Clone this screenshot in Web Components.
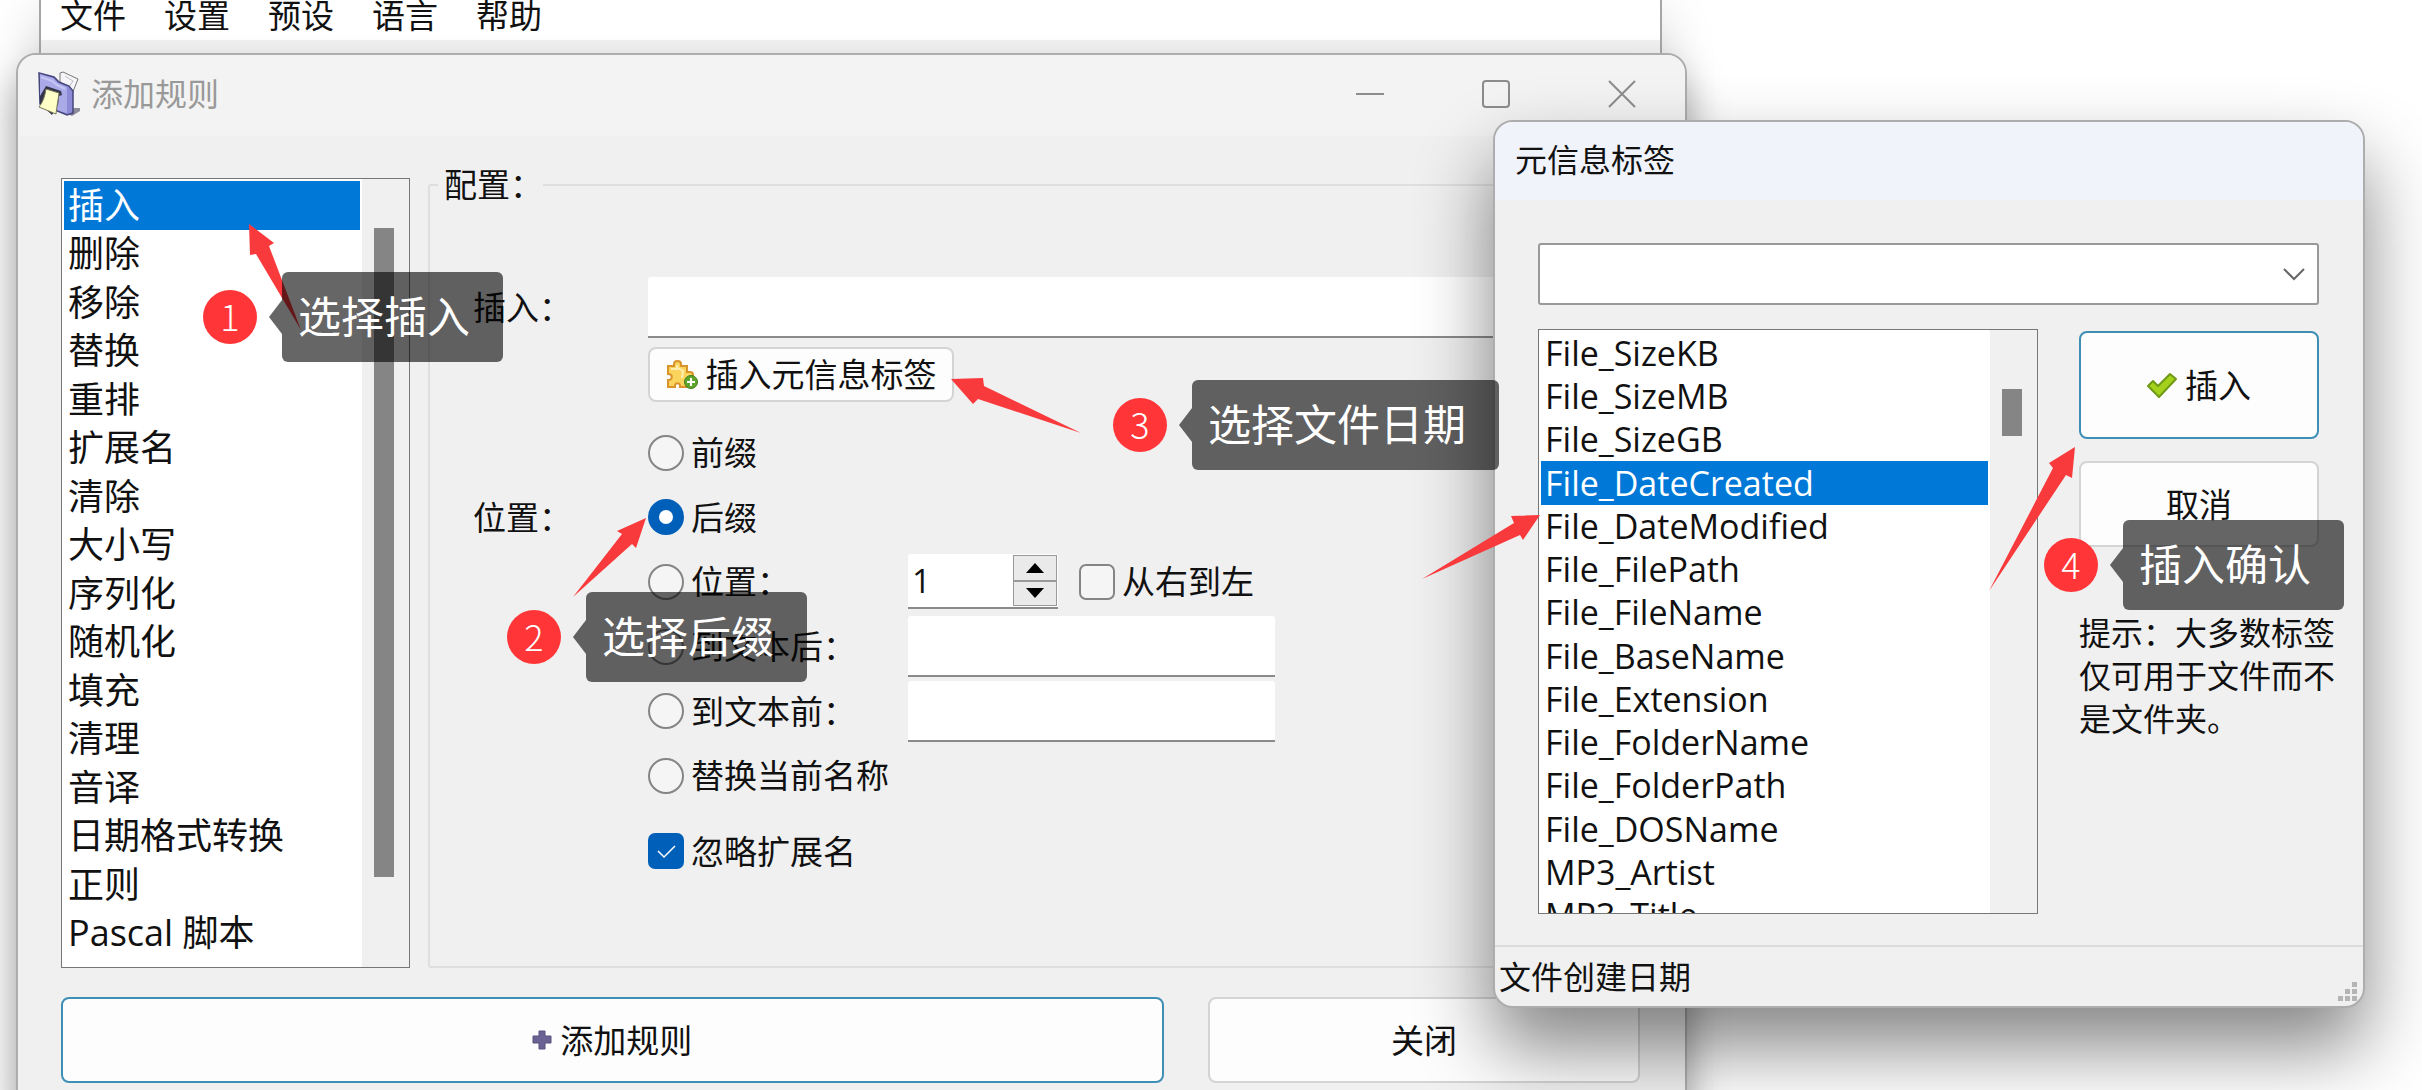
<!DOCTYPE html>
<html lang="zh-CN">
<head>
<meta charset="utf-8">
<title>添加规则</title>
<style>
  html, body {
    height: 100%;
  }

  body {
    margin: 0;
    overflow: hidden;
    background: #fff;
    color: #111;
    font: 33px/43px "Open Sans", "Noto Sans CJK SC", sans-serif;
  }
</style>
</head>
<body>
<desk-top></desk-top>

<script>
const define = (name, html, setup) => {
  const template = document.createElement('template')
  template.innerHTML = html

  customElements.define(name, class extends HTMLElement {
    constructor() {
      super()
      this.attachShadow({ mode: 'open' }).appendChild(template.content.cloneNode(true))
    }

    connectedCallback() {
      if (setup) setup(this, this.shadowRoot)
    }
  })
}

// window frame: title bar and body
define('desk-window', `
  <style>
    :host {
      display: block;
      box-sizing: border-box;
      border: 2px solid #adadad;
      border-radius: 20px;
      background: #f0f0f0;
      overflow: hidden;
    }
    header {
      display: flex;
      align-items: center;
      box-sizing: border-box;
      height: var(--title-height, 81px);
      padding: 0 48px 4px 20px;
      background: var(--title-bg, #f3f3f3);
      color: var(--title-color, #111);
      font-size: 32px;
    }
    h1 {
      flex: 1;
      margin: 0;
      font: inherit;
    }
  </style>
  <header><slot name="icon"></slot><h1></h1><slot name="controls"></slot></header>
  <slot></slot>
`, (el, root) => {
  root.querySelector('h1').textContent = el.getAttribute('heading')
})

define('window-controls', `
  <style>
    :host { display: flex; gap: 96px; }
    button { width: 30px; height: 30px; padding: 0; border: 0; background: none; }
    svg { display: block; fill: none; stroke: #8c8c8c; stroke-width: 2; }
  </style>
  <button aria-label="最小化"><svg width="30" height="30"><path d="M1 15H29"/></svg></button>
  <button aria-label="最大化"><svg width="30" height="30"><rect x="2" y="2" width="26" height="26" rx="3"/></svg></button>
  <button aria-label="关闭"><svg width="30" height="30"><path d="M2 2L28 28M28 2L2 28"/></svg></button>
`)

define('app-icon', `
  <style>
    :host { display: block; width: 44px; height: 46px; margin-right: 9px; }
  </style>
  <svg width="44" height="46" viewBox="0 0 44 46">
    <path d="M33 37L42 37L42 40L34 45L30 43Z" fill="#8a8a98"/>
    <path d="M22 2L25 1L40 8L34 23L22 12Z" fill="#f6f6fa" stroke="#777" stroke-width="1"/>
    <path d="M27 5L35 10L31 16" fill="none" stroke="#bbb"/>
    <path d="M1 2L16 6L21 11L31 15L35 20L35 42L29 44L2 33Z" fill="#8c8cd6" stroke="#45457c" stroke-width="1.5"/>
    <path d="M2 3L15 7L20 12L29 16L29 42L22 40L2 30Z" fill="#aaaae8"/>
    <path d="M3 6L14 10L19 14L27 18" fill="none" stroke="#c5c5f5" stroke-width="2"/>
    <path d="M8 15L23 20L24 24L21 25L20 34L14 44L2 33L2 25Z" fill="#34344a"/>
    <path d="M8 18L21 22C20 30 19 34 18 43L1 36C5 31 7 25 8 18Z" fill="#ffffc8" stroke="#77775c" stroke-width="1"/>
  </svg>
`)

define('push-button', `
  <style>
    :host { display: block; }
    button {
      display: flex;
      align-items: center;
      justify-content: center;
      gap: 8px;
      box-sizing: border-box;
      width: 100%;
      height: 100%;
      padding: 0;
      border: 2px solid #d4d4d4;
      border-radius: 8px;
      background: #fdfdfd;
      color: inherit;
      font: inherit;
      white-space: nowrap;
    }
    :host([primary]) button { border-color: #3f8fb5; }
    ::slotted(svg) { flex: none; }
  </style>
  <button><slot name="icon"></slot><span><slot></slot></span></button>
`)

define('list-box', `
  <style>
    :host {
      display: grid;
      grid-template-columns: minmax(0, 1fr) 47px;
      box-sizing: border-box;
      border: 1px solid #777;
      background: #fff;
      overflow: hidden;
      font-size: 34px;
    }
    ul {
      margin: 0;
      padding: 2px;
      list-style: none;
      overflow: hidden;
    }
    li {
      padding-left: 4px;
      line-height: 43px;
      white-space: nowrap;
    }
    li:nth-child(4n) { line-height: 44px; }
    :host([large]) { font-size: 36px; }
    :host([large]) li { line-height: 48px; }
    :host([large]) li:nth-child(odd) { line-height: 49px; }
    li[aria-selected=true] { background: #0078d7; color: #fff; }
    .track {
      padding: var(--thumb-top) 0 0 12px;
      background: #f0f0f0;
    }
    .thumb {
      width: 20px;
      height: var(--thumb-height);
      background: #858585;
    }
  </style>
  <ul role="listbox"></ul>
  <div class="track"><div class="thumb"></div></div>
`, (el, root) => {
  const ul = root.querySelector('ul')
  ul.setAttribute('aria-label', el.getAttribute('label'))
  el.getAttribute('items').split('|').forEach(text => {
    const li = document.createElement('li')
    li.setAttribute('role', 'option')
    li.setAttribute('aria-selected', text === el.getAttribute('selected'))
    li.textContent = text
    ul.appendChild(li)
  })
})

// radio or check box with its label
define('choice-field', `
  <style>
    :host { display: flex; align-items: center; }
    label { display: flex; align-items: center; gap: 7px; white-space: nowrap; }
    input {
      appearance: none;
      box-sizing: border-box;
      width: 36px;
      height: 36px;
      margin: 0;
      border: 2px solid #858585;
      background: #f5f5f5;
    }
    input[type=radio] { border-radius: 50%; }
    input[type=radio]:checked { border: 11px solid #005fb8; background: #fff; }
    input[type=checkbox] { border-radius: 7px; }
    .box { display: grid; }
    .box > * { grid-area: 1 / 1; }
    input[type=checkbox]:checked { border-color: #005fb8; background: #005fb8; }
    svg { display: none; fill: none; stroke: #fff; stroke-width: 1.5; pointer-events: none; }
    input[type=checkbox]:checked + svg { display: block; }
  </style>
  <label>
    <span class="box"><input><svg width="36" height="36"><path d="M10 18L16 24L27 13"/></svg></span>
    <span><slot></slot></span>
  </label>
`, (el, root) => {
  const input = root.querySelector('input')
  input.type = el.getAttribute('type')
  input.checked = el.hasAttribute('checked')
})

define('rule-config', `
  <style>
    :host { display: block; }
    fieldset {
      box-sizing: border-box;
      height: 100%;
      margin: 0;
      padding: 71px 0 0 43px;
      border: 2px solid #dfdfdf;
      border-radius: 3px;
    }
    legend { margin-left: -35px; padding: 0 0 0 6px; }
    .form {
      display: grid;
      grid-template-columns: 175px 260px 1fr;
      grid-template-rows: 61px 9px 55px 18px repeat(2, 65px 64px 65px) 25px 36px;
      align-items: center;
    }
    .text, .number {
      box-sizing: border-box;
      height: 61px;
      padding: 0 8px;
      border: 0;
      border-bottom: 2px solid #8a8a8a;
      background: #fff;
      color: inherit;
      font: inherit;
      border-radius: 3px 3px 0 0;
    }
    .wide { grid-area: 1 / 2 / 2 / 4; }
    .tag { grid-area: 3 / 2 / 4 / 4; justify-self: start; height: 55px; width: 306px; }
    .place { grid-area: 6 / 1; }
    .c1 { grid-area: 5 / 2; }
    .c2 { grid-area: 6 / 2; }
    .c3 { grid-area: 7 / 2; }
    .c4 { grid-area: 8 / 2; }
    .c5 { grid-area: 9 / 2; }
    .c6 { grid-area: 10 / 2 / 11 / 4; }
    .c7 { grid-area: 12 / 2 / 13 / 4; }
    .e3 { grid-area: 7 / 3; display: flex; align-items: center; gap: 21px; }
    .e4 { grid-area: 8 / 3; width: 367px; }
    .e5 { grid-area: 9 / 3; width: 367px; }
    .number { display: flex; width: 150px; height: 55px; padding: 0; }
    .number input {
      appearance: textfield;
      flex: 1;
      min-width: 0;
      padding: 0 4px;
      border: 0;
      background: none;
      color: inherit;
      font: inherit;
    }
    .number input::-webkit-inner-spin-button { appearance: none; }
    .spin { display: grid; grid-template-rows: 1fr 1fr; width: 44px; padding: 1px; }
    .spin button { display: grid; place-items: center; padding: 0; border: 1px solid #999; background: #eaeaea; }
  </style>
  <fieldset>
    <legend>配置：</legend>
    <div class="form">
      <label for="insert">插入：</label>
      <input class="text wide" id="insert">
      <push-button class="tag">
        <svg slot="icon" width="32" height="30" viewBox="0 0 32 30">
          <path d="M2 6H8V4C8 0 15 0 15 4V6H21V12H24C28 12 28 18 24 18H21V27H14C15 22 8 22 9 27H2V20C7 20 7 14 2 14Z" fill="#fbd45e" stroke="#d9932b" stroke-width="2"/>
          <path d="M5 9H11V5M12 8L17 11L16 18" stroke="#ffeeb0" stroke-width="2" fill="none"/>
          <circle cx="25" cy="22" r="6.5" fill="#5fa52c" stroke="#3f7d1c"/>
          <path d="M25 18V26M21 22H29" stroke="#fff" stroke-width="2"/>
        </svg>插入元信息标签</push-button>
      <span class="place">位置：</span>
      <choice-field class="c1" type="radio">前缀</choice-field>
      <choice-field class="c2" type="radio" checked>后缀</choice-field>
      <choice-field class="c3" type="radio">位置：</choice-field>
      <div class="e3">
        <div class="number">
          <input type="number" value="1" aria-label="位置">
          <div class="spin">
            <button aria-label="增加"><svg width="18" height="10"><path d="M0 10L9 0L18 10Z"/></svg></button>
            <button aria-label="减少"><svg width="18" height="10"><path d="M0 0L9 10L18 0Z"/></svg></button>
          </div>
        </div>
        <choice-field type="checkbox">从右到左</choice-field>
      </div>
      <choice-field class="c4" type="radio">到文本后：</choice-field>
      <input class="text e4" aria-label="到文本后">
      <choice-field class="c5" type="radio">到文本前：</choice-field>
      <input class="text e5" aria-label="到文本前">
      <choice-field class="c6" type="radio">替换当前名称</choice-field>
      <choice-field class="c7" type="checkbox" checked>忽略扩展名</choice-field>
    </div>
  </fieldset>
`)

define('rule-panel', `
  <style>
    :host { display: block; padding: 27px 45px 40px 43px; }
    .top { display: grid; grid-template-columns: 349px 1fr; gap: 18px; height: 805px; }
    list-box { margin-top: 15px; --thumb-top: 49px; --thumb-height: 649px; }
    .actions { display: grid; grid-template-columns: 51fr 20fr; gap: 44px; margin-top: 29px; }
    push-button { height: 86px; }
  </style>
  <div class="top">
    <list-box large label="规则" selected="插入"
      items="插入|删除|移除|替换|重排|扩展名|清除|大小写|序列化|随机化|填充|清理|音译|日期格式转换|正则|Pascal 脚本"></list-box>
    <rule-config></rule-config>
  </div>
  <div class="actions">
    <push-button primary>
      <svg slot="icon" width="20" height="20"><path d="M7 1H13V6H19V13H13V19H7V13H1V6H7Z" fill="#6b6294" stroke="#57507e"/></svg>添加规则</push-button>
    <push-button>关闭</push-button>
  </div>
`)

define('tag-panel', `
  <style>
    :host { display: block; }
    .body { padding: 43px 18px 31px 43px; }
    .combo { display: grid; align-items: center; margin-right: 26px; }
    .combo > * { grid-area: 1 / 1; }
    select {
      appearance: none;
      width: 100%;
      height: 62px;
      border: 2px solid #999;
      border-radius: 3px;
      background: #fff;
      font: inherit;
    }
    .combo svg { justify-self: end; margin-right: 14px; fill: none; stroke: #666; stroke-width: 2; pointer-events: none; }
    .cols { display: grid; grid-template-columns: 500px 1fr; gap: 41px; margin-top: 24px; height: 585px; }
    list-box { --thumb-top: 59px; --thumb-height: 47px; min-height: 0; }
    push-button { margin: 2px 26px 22px 0; height: 108px; }
    push-button + push-button { margin: 0 26px 64px 0; height: 86px; }
    p { margin: 0; font-size: 32px; }
    footer {
      display: flex;
      align-items: center;
      justify-content: space-between;
      height: 59px;
      padding: 0 6px 0 4px;
      border-top: 2px solid #dcdcdc;
      font-size: 32px;
    }
    footer svg { align-self: flex-end; margin-bottom: 4px; fill: #b4b4b4; }
  </style>
  <div class="body">
    <div class="combo">
      <select aria-label="筛选"><option></option></select>
      <svg width="22" height="14"><path d="M1 2L11 12L21 2"/></svg>
    </div>
    <div class="cols">
      <list-box label="标签" selected="File_DateCreated"
        items="File_SizeKB|File_SizeMB|File_SizeGB|File_DateCreated|File_DateModified|File_FilePath|File_FileName|File_BaseName|File_Extension|File_FolderName|File_FolderPath|File_DOSName|MP3_Artist|MP3_Title"></list-box>
      <div>
        <push-button primary>
          <svg slot="icon" width="30" height="26"><path d="M1 14L6 9L11 14L23 2L29 7L12 25Z" fill="#a4d21c" stroke="#6f9a17" stroke-width="2" stroke-linejoin="round"/></svg>插入</push-button>
        <push-button>取消</push-button>
        <p>提示：大多数标签仅可用于文件而不是文件夹。</p>
      </div>
    </div>
  </div>
  <footer>
    <span>文件创建日期</span>
    <svg width="20" height="20"><path d="M15 0h5v5h-5zM15 7h5v5h-5zM8 7h5v5h-5zM15 14h5v5h-5zM8 14h5v5h-5zM1 14h5v5h-5z"/></svg>
  </footer>
`)

define('main-menu', `
  <style>
    :host { display: block; box-sizing: border-box; border: solid #a5a5a5; border-width: 0 2px; background: #f0f0f0; }
    nav { display: flex; gap: 38px; height: 40px; padding-left: 19px; line-height: 32px; background: #fff; }
    a { color: inherit; text-decoration: none; }
  </style>
  <nav><a href="#">文件</a><a href="#">设置</a><a href="#">预设</a><a href="#">语言</a><a href="#">帮助</a></nav>
`)

// numbered red dot with a speech bubble on its right
define('step-callout', `
  <style>
    :host { display: flex; align-items: center; height: 90px; }
    .dot {
      width: 54px;
      height: 54px;
      margin-right: 12px;
      border-radius: 50%;
      background: #ff3538;
      color: #fff;
      font: 300 36px/50px "Noto Sans CJK SC", sans-serif;
      text-align: center;
    }
    svg { display: block; }
    .bubble {
      padding: 0 33px 0 16px;
      border-radius: 6px;
      background: rgba(0, 0, 0, .6);
      color: #fff;
      font-size: 43px;
      line-height: 90px;
      white-space: nowrap;
    }
  </style>
  <span class="dot"></span>
  <svg width="13" height="34"><path d="M13 0L0 17L13 34Z" fill="rgba(0,0,0,.6)"/></svg>
  <span class="bubble"><slot></slot></span>
`, (el, root) => {
  root.querySelector('.dot').textContent = el.getAttribute('step')
})

define('arrow-layer', `
  <style>
    :host { display: block; pointer-events: none; }
    svg { display: block; width: 100%; height: 100%; fill: #f93a3c; }
  </style>
  <svg>
    <path d="M249 224L274 243L269 246L301 330L256 254L250 255Z"/>
    <path d="M646 518L617 531L622 534L573 597L632 544L636 548Z"/>
    <path d="M951 379L983 378L984 386L1081 433L978 399L973 404Z"/>
    <path d="M1540 515L1511 516L1514 523L1422 579L1520 535L1523 540Z"/>
    <path d="M2075 447L2049 463L2053 468L1989 591L2066 475L2072 478Z"/>
  </svg>
`)

define('desk-top', `
  <style>
    :host { display: block; position: relative; height: 100%; overflow: hidden; }
    main-menu, desk-window, arrow-layer, step-callout { position: absolute; }
    main-menu { left: 39px; top: 0; width: 67vw; height: 100%; box-shadow: 0 20px 50px rgba(0, 0, 0, .2); }
    .rules {
      left: 16px;
      top: 53px;
      width: 69vw;
      --title-color: #999;
      box-shadow: 0 24px 40px rgba(0, 0, 0, .36);
    }
    .tags {
      left: 1493px;
      top: 120px;
      width: 36vw;
      --title-height: 78px;
      --title-bg: #f0f3fa;
      box-shadow: 0 40px 76px rgba(0, 0, 0, .48);
    }
    arrow-layer { left: 0; top: 0; width: 100%; height: 100%; }
  </style>
  <main-menu></main-menu>
  <desk-window class="rules" heading="添加规则">
    <app-icon slot="icon"></app-icon>
    <window-controls slot="controls"></window-controls>
    <rule-panel></rule-panel>
  </desk-window>
  <desk-window class="tags" heading="元信息标签">
    <tag-panel></tag-panel>
  </desk-window>
  <arrow-layer></arrow-layer>
  <step-callout step="1" style="left: 203px; top: 272px">选择插入</step-callout>
  <step-callout step="2" style="left: 507px; top: 592px">选择后缀</step-callout>
  <step-callout step="3" style="left: 1113px; top: 380px">选择文件日期</step-callout>
  <step-callout step="4" style="left: 2044px; top: 520px">插入确认</step-callout>
`)
</script>
</body>
</html>
